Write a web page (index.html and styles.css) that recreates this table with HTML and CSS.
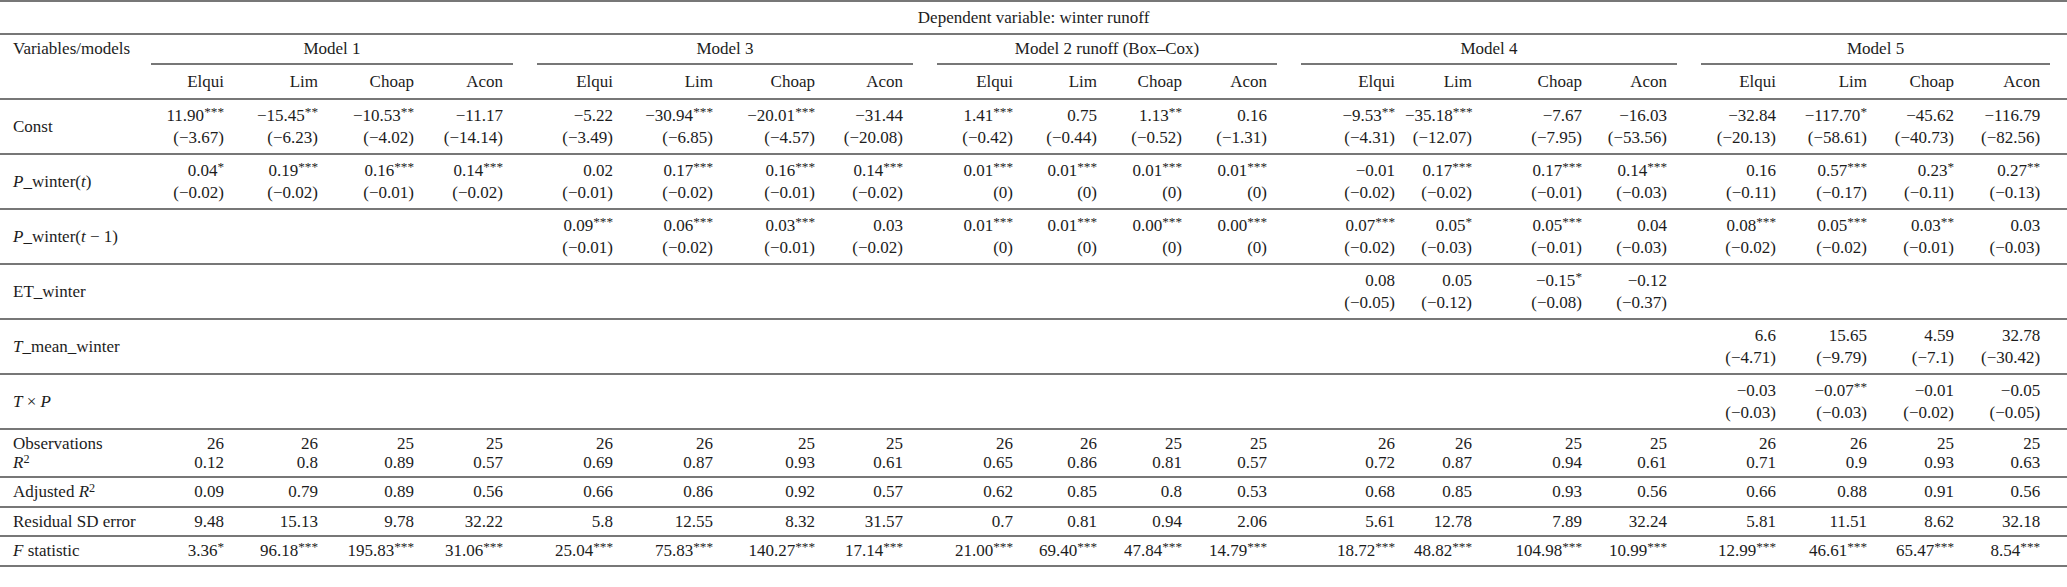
FILE: index.html
```html
<!DOCTYPE html>
<html lang="en">
<head>
<meta charset="utf-8">
<title>Dependent variable: winter runoff</title>
<link rel="stylesheet" href="styles.css">
</head>
<body>
<table class="reg">
<colgroup>
<col class="c-label">
<col class="w83"><col class="w94"><col class="w96"><col class="w89">
<col class="w110"><col class="w100"><col class="w102"><col class="w88">
<col class="w110"><col class="w84"><col class="w85"><col class="w85">
<col class="w128"><col class="w77"><col class="w110"><col class="w85">
<col class="w109"><col class="w91"><col class="w87"><col class="w103">
</colgroup>
<tbody>
<tr class="r-dep"><td class="dep" colspan="21">Dependent variable: winter runoff</td></tr>
<tr class="r-models">
<td class="label head-label" rowspan="2">Variables/models</td>
<td class="grp" colspan="4"><div class="grp-line g-first">Model 1</div></td>
<td class="grp" colspan="4"><div class="grp-line">Model 3</div></td>
<td class="grp" colspan="4"><div class="grp-line">Model 2 runoff (Box–Cox)</div></td>
<td class="grp" colspan="4"><div class="grp-line">Model 4</div></td>
<td class="grp" colspan="4"><div class="grp-line g-last">Model 5</div></td>
</tr>
<tr class="r-cols">
<td class="num">Elqui</td><td class="num">Lim</td><td class="num">Choap</td><td class="num">Acon</td>
<td class="num">Elqui</td><td class="num">Lim</td><td class="num">Choap</td><td class="num">Acon</td>
<td class="num">Elqui</td><td class="num">Lim</td><td class="num">Choap</td><td class="num">Acon</td>
<td class="num">Elqui</td><td class="num">Lim</td><td class="num">Choap</td><td class="num">Acon</td>
<td class="num">Elqui</td><td class="num">Lim</td><td class="num">Choap</td><td class="num last">Acon</td>
</tr>
<tr class="r-coef">
<td class="label">Const</td>
<td class="num">11.90<sup>***</sup><br>(−3.67)</td>
<td class="num">−15.45<sup>**</sup><br>(−6.23)</td>
<td class="num">−10.53<sup>**</sup><br>(−4.02)</td>
<td class="num">−11.17<br>(−14.14)</td>
<td class="num">−5.22<br>(−3.49)</td>
<td class="num">−30.94<sup>***</sup><br>(−6.85)</td>
<td class="num">−20.01<sup>***</sup><br>(−4.57)</td>
<td class="num">−31.44<br>(−20.08)</td>
<td class="num">1.41<sup>***</sup><br>(−0.42)</td>
<td class="num">0.75<br>(−0.44)</td>
<td class="num">1.13<sup>**</sup><br>(−0.52)</td>
<td class="num">0.16<br>(−1.31)</td>
<td class="num">−9.53<sup>**</sup><br>(−4.31)</td>
<td class="num">−35.18<sup>***</sup><br>(−12.07)</td>
<td class="num">−7.67<br>(−7.95)</td>
<td class="num">−16.03<br>(−53.56)</td>
<td class="num">−32.84<br>(−20.13)</td>
<td class="num">−117.70<sup>*</sup><br>(−58.61)</td>
<td class="num">−45.62<br>(−40.73)</td>
<td class="num last">−116.79<br>(−82.56)</td>
</tr>
<tr class="r-coef">
<td class="label"><i>P</i>_winter(<i>t</i>)</td>
<td class="num">0.04<sup>*</sup><br>(−0.02)</td>
<td class="num">0.19<sup>***</sup><br>(−0.02)</td>
<td class="num">0.16<sup>***</sup><br>(−0.01)</td>
<td class="num">0.14<sup>***</sup><br>(−0.02)</td>
<td class="num">0.02<br>(−0.01)</td>
<td class="num">0.17<sup>***</sup><br>(−0.02)</td>
<td class="num">0.16<sup>***</sup><br>(−0.01)</td>
<td class="num">0.14<sup>***</sup><br>(−0.02)</td>
<td class="num">0.01<sup>***</sup><br>(0)</td>
<td class="num">0.01<sup>***</sup><br>(0)</td>
<td class="num">0.01<sup>***</sup><br>(0)</td>
<td class="num">0.01<sup>***</sup><br>(0)</td>
<td class="num">−0.01<br>(−0.02)</td>
<td class="num">0.17<sup>***</sup><br>(−0.02)</td>
<td class="num">0.17<sup>***</sup><br>(−0.01)</td>
<td class="num">0.14<sup>***</sup><br>(−0.03)</td>
<td class="num">0.16<br>(−0.11)</td>
<td class="num">0.57<sup>***</sup><br>(−0.17)</td>
<td class="num">0.23<sup>*</sup><br>(−0.11)</td>
<td class="num last">0.27<sup>**</sup><br>(−0.13)</td>
</tr>
<tr class="r-coef">
<td class="label"><i>P</i>_winter(<i>t</i> − 1)</td>
<td class="num"></td><td class="num"></td><td class="num"></td><td class="num"></td>
<td class="num">0.09<sup>***</sup><br>(−0.01)</td>
<td class="num">0.06<sup>***</sup><br>(−0.02)</td>
<td class="num">0.03<sup>***</sup><br>(−0.01)</td>
<td class="num">0.03<br>(−0.02)</td>
<td class="num">0.01<sup>***</sup><br>(0)</td>
<td class="num">0.01<sup>***</sup><br>(0)</td>
<td class="num">0.00<sup>***</sup><br>(0)</td>
<td class="num">0.00<sup>***</sup><br>(0)</td>
<td class="num">0.07<sup>***</sup><br>(−0.02)</td>
<td class="num">0.05<sup>*</sup><br>(−0.03)</td>
<td class="num">0.05<sup>***</sup><br>(−0.01)</td>
<td class="num">0.04<br>(−0.03)</td>
<td class="num">0.08<sup>***</sup><br>(−0.02)</td>
<td class="num">0.05<sup>***</sup><br>(−0.02)</td>
<td class="num">0.03<sup>**</sup><br>(−0.01)</td>
<td class="num last">0.03<br>(−0.03)</td>
</tr>
<tr class="r-coef">
<td class="label">ET_winter</td>
<td class="num"></td><td class="num"></td><td class="num"></td><td class="num"></td>
<td class="num"></td><td class="num"></td><td class="num"></td><td class="num"></td>
<td class="num"></td><td class="num"></td><td class="num"></td><td class="num"></td>
<td class="num">0.08<br>(−0.05)</td>
<td class="num">0.05<br>(−0.12)</td>
<td class="num">−0.15<sup>*</sup><br>(−0.08)</td>
<td class="num">−0.12<br>(−0.37)</td>
<td class="num"></td><td class="num"></td><td class="num"></td><td class="num last"></td>
</tr>
<tr class="r-coef">
<td class="label"><i>T</i>_mean_winter</td>
<td class="num"></td><td class="num"></td><td class="num"></td><td class="num"></td>
<td class="num"></td><td class="num"></td><td class="num"></td><td class="num"></td>
<td class="num"></td><td class="num"></td><td class="num"></td><td class="num"></td>
<td class="num"></td><td class="num"></td><td class="num"></td><td class="num"></td>
<td class="num">6.6<br>(−4.71)</td>
<td class="num">15.65<br>(−9.79)</td>
<td class="num">4.59<br>(−7.1)</td>
<td class="num last">32.78<br>(−30.42)</td>
</tr>
<tr class="r-coef">
<td class="label"><i>T</i> × <i>P</i></td>
<td class="num"></td><td class="num"></td><td class="num"></td><td class="num"></td>
<td class="num"></td><td class="num"></td><td class="num"></td><td class="num"></td>
<td class="num"></td><td class="num"></td><td class="num"></td><td class="num"></td>
<td class="num"></td><td class="num"></td><td class="num"></td><td class="num"></td>
<td class="num">−0.03<br>(−0.03)</td>
<td class="num">−0.07<sup>**</sup><br>(−0.03)</td>
<td class="num">−0.01<br>(−0.02)</td>
<td class="num last">−0.05<br>(−0.05)</td>
</tr>
<tr class="r-obs">
<td class="label">Observations<br><i>R</i><sup class="sq">2</sup></td>
<td class="num">26<br>0.12</td><td class="num">26<br>0.8</td><td class="num">25<br>0.89</td><td class="num">25<br>0.57</td>
<td class="num">26<br>0.69</td><td class="num">26<br>0.87</td><td class="num">25<br>0.93</td><td class="num">25<br>0.61</td>
<td class="num">26<br>0.65</td><td class="num">26<br>0.86</td><td class="num">25<br>0.81</td><td class="num">25<br>0.57</td>
<td class="num">26<br>0.72</td><td class="num">26<br>0.87</td><td class="num">25<br>0.94</td><td class="num">25<br>0.61</td>
<td class="num">26<br>0.71</td><td class="num">26<br>0.9</td><td class="num">25<br>0.93</td><td class="num last">25<br>0.63</td>
</tr>
<tr class="r-one r-adj">
<td class="label">Adjusted <i>R</i><sup class="sq">2</sup></td>
<td class="num">0.09</td><td class="num">0.79</td><td class="num">0.89</td><td class="num">0.56</td>
<td class="num">0.66</td><td class="num">0.86</td><td class="num">0.92</td><td class="num">0.57</td>
<td class="num">0.62</td><td class="num">0.85</td><td class="num">0.8</td><td class="num">0.53</td>
<td class="num">0.68</td><td class="num">0.85</td><td class="num">0.93</td><td class="num">0.56</td>
<td class="num">0.66</td><td class="num">0.88</td><td class="num">0.91</td><td class="num last">0.56</td>
</tr>
<tr class="r-one">
<td class="label">Residual SD error</td>
<td class="num">9.48</td><td class="num">15.13</td><td class="num">9.78</td><td class="num">32.22</td>
<td class="num">5.8</td><td class="num">12.55</td><td class="num">8.32</td><td class="num">31.57</td>
<td class="num">0.7</td><td class="num">0.81</td><td class="num">0.94</td><td class="num">2.06</td>
<td class="num">5.61</td><td class="num">12.78</td><td class="num">7.89</td><td class="num">32.24</td>
<td class="num">5.81</td><td class="num">11.51</td><td class="num">8.62</td><td class="num last">32.18</td>
</tr>
<tr class="r-one r-f">
<td class="label"><i>F</i> statistic</td>
<td class="num">3.36<sup>*</sup></td><td class="num">96.18<sup>***</sup></td><td class="num">195.83<sup>***</sup></td><td class="num">31.06<sup>***</sup></td>
<td class="num">25.04<sup>***</sup></td><td class="num">75.83<sup>***</sup></td><td class="num">140.27<sup>***</sup></td><td class="num">17.14<sup>***</sup></td>
<td class="num">21.00<sup>***</sup></td><td class="num">69.40<sup>***</sup></td><td class="num">47.84<sup>***</sup></td><td class="num">14.79<sup>***</sup></td>
<td class="num">18.72<sup>***</sup></td><td class="num">48.82<sup>***</sup></td><td class="num">104.98<sup>***</sup></td><td class="num">10.99<sup>***</sup></td>
<td class="num">12.99<sup>***</sup></td><td class="num">46.61<sup>***</sup></td><td class="num">65.47<sup>***</sup></td><td class="num last">8.54<sup>***</sup></td>
</tr>
</tbody>
</table>
</body>
</html>
```

FILE: styles.css
```css
html, body {
  margin: 0;
  padding: 0;
  background: #ffffff;
}

body {
  font-family: "Liberation Serif", "Times New Roman", serif;
  font-size: 17px;
  color: #1c1c1c;
}

.reg {
  width: 2067px;
  table-layout: fixed;
  border-collapse: separate;
  border-spacing: 0;
}

.c-label { width: 151px; }
.w77 { width: 77px; }
.w83 { width: 83px; }
.w84 { width: 84px; }
.w85 { width: 85px; }
.w87 { width: 87px; }
.w88 { width: 88px; }
.w89 { width: 89px; }
.w91 { width: 91px; }
.w94 { width: 94px; }
.w96 { width: 96px; }
.w100 { width: 100px; }
.w102 { width: 102px; }
.w103 { width: 103px; }
.w109 { width: 109px; }
.w110 { width: 110px; }
.w128 { width: 128px; }

.reg td {
  padding: 0;
  vertical-align: middle;
  white-space: nowrap;
}

.dep {
  text-align: center;
  border-top: 2px solid #777;
  border-bottom: 2px solid #777;
  line-height: 20px;
}

.r-dep { height: 35px; }

.r-models { height: 30px; }

.r-cols { height: 35px; }
.r-cols td { border-bottom: 2px solid #777; line-height: 20px; }

.head-label {
  vertical-align: top !important;
  padding-top: 4px !important;
  border-bottom: 2px solid #777;
  line-height: 20px;
}

.label {
  padding-left: 13px !important;
  text-align: left;
}

.grp {
  vertical-align: bottom !important;
}

.grp-line {
  margin-left: 24px;
  height: 28px;
  line-height: 28px;
  text-align: center;
  border-bottom: 2px solid #777;
}

.grp-line.g-first { margin-left: 0; }
.grp-line.g-last { margin-right: 17px; }

.num {
  text-align: right;
  padding-right: 10px !important;
}

.num.last { padding-right: 27px !important; }

.r-coef { height: 55px; }
.r-coef td { border-bottom: 2px solid #777; line-height: 22px; }

.r-obs { height: 48px; }
.r-obs td { border-bottom: 2px solid #777; line-height: 19px; }

.r-one { height: 29px; }
.r-one td { border-bottom: 2px solid #777; line-height: 20px; }
.r-adj { height: 30px; }
.r-f { height: 30px; }

sup {
  font-size: 0.78em;
  line-height: 0;
  vertical-align: 0.36em;
}

sup.sq {
  font-size: 0.72em;
  vertical-align: 0.45em;
}
```
